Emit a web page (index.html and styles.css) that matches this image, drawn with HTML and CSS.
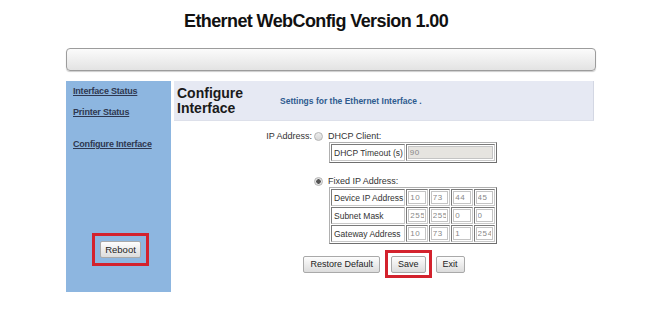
FILE: index.html
```html
<!DOCTYPE html>
<html lang="en">

<head>
    <meta charset="UTF-8">
    <meta name="viewport" content="width=device-width, initial-scale=1.0">
    <title>Ethernet WebConfig</title>
    <link rel="stylesheet" href="styles.css">
</head>

<body>
    <h1 class="title">Ethernet WebConfig Version 1.00</h1>
    <div class="page">
        <div class="bar"></div>
        <div class="frame">
            <!-- 左侧菜单 -->
            <div class="sidebar">
                <div class="nav">
                    <a href="#">Interface Status</a>
                    <a href="#" class="second">Printer Status</a>
                    <a href="#" class="third">Configure Interface</a>
                </div>
                <div class="mark">
                    <button class="btn">Reboot</button>
                </div>
            </div>
            <!-- 右侧内容 -->
            <div class="main">
                <div class="head">
                    <h2>Configure<br>Interface</h2>
                    <span>Settings for the Ethernet Interface .</span>
                </div>
                <div class="form">
                    <div class="field-label">IP Address:</div>
                    <div class="options">
                        <div class="option"><span class="radio"></span>DHCP Client:</div>
                        <table class="grid dhcp">
                            <tr>
                                <td class="name">DHCP Timeout (s)</td>
                                <td><input class="off" type="text" value="90"></td>
                            </tr>
                        </table>
                        <div class="option fixed"><span class="radio on"></span>Fixed IP Address:</div>
                        <table class="grid">
                            <tr>
                                <td class="name">Device IP Address</td>
                                <td><input type="text" value="10"></td>
                                <td><input type="text" value="73"></td>
                                <td><input type="text" value="44"></td>
                                <td><input type="text" value="45"></td>
                            </tr>
                            <tr>
                                <td class="name">Subnet Mask</td>
                                <td><input type="text" value="255"></td>
                                <td><input type="text" value="255"></td>
                                <td><input type="text" value="0"></td>
                                <td><input type="text" value="0"></td>
                            </tr>
                            <tr>
                                <td class="name">Gateway Address</td>
                                <td><input type="text" value="10"></td>
                                <td><input type="text" value="73"></td>
                                <td><input type="text" value="1"></td>
                                <td><input type="text" value="254"></td>
                            </tr>
                        </table>
                    </div>
                </div>
                <div class="actions">
                    <button class="btn">Restore Default</button>
                    <div class="mark save">
                        <button class="btn">Save</button>
                    </div>
                    <button class="btn">Exit</button>
                </div>
            </div>
        </div>
    </div>
</body>

</html>
```

FILE: styles.css
```css
* {
    margin: 0;
    padding: 0;
    box-sizing: border-box;
}

body {
    font-family: "Liberation Sans", Arial, sans-serif;
    color: #222;
    background-color: #fff;
}

.title {
    font-size: 18px;
    letter-spacing: -0.6px;
    line-height: 22px;
    padding: 10px 0 0 184px;
    color: #111;
}

.page {
    width: 530px;
    margin-left: 66px;
}

.bar {
    margin-top: 16px;
    height: 23px;
    border: 1px solid #9c9c9c;
    border-radius: 4px;
    background: linear-gradient(#fbfbfb, #e3e3e3);
    box-shadow: 0 1px 1px #ccc;
}

.frame {
    display: flex;
    margin-top: 10px;
    height: 211px;
}

/* 左侧菜单 */
.sidebar {
    width: 105px;
    background-color: #8db6e0;
    display: flex;
    flex-direction: column;
    justify-content: space-between;
    padding: 4px 0 26px 7px;
}

.nav a {
    display: block;
    font-size: 9px;
    font-weight: bold;
    letter-spacing: -0.2px;
    line-height: 12px;
    color: #2f3850;
}

.nav .second {
    margin-top: 9px;
}

.nav .third {
    margin-top: 20px;
}

.mark {
    align-self: center;
    border: 3px solid #d3222d;
    padding: 5px 5px;
}

.sidebar .mark {
    margin-left: -3px;
}

.btn {
    display: block;
    height: 17px;
    font-family: "Liberation Sans", Arial, sans-serif;
    font-size: 9.5px;
    color: #222;
    padding: 0 4px;
    border: 1px solid #a9a9a9;
    border-radius: 2px;
    background: linear-gradient(#fdfdfd, #dcdcdc);
}

/* 右侧内容 */
.main {
    flex: 1;
    margin-left: 3px;
}

.head {
    display: flex;
    align-items: center;
    height: 40px;
    margin-right: 2px;
    background-color: #e6e9f3;
    border-right: 1px solid #d3d7e3;
    border-bottom: 1px solid #dde0ea;
}

.head h2 {
    font-size: 14px;
    line-height: 15px;
    width: 106px;
    padding-left: 3px;
    color: #1a1a1a;
}

.head span {
    font-size: 8.5px;
    font-weight: bold;
    color: #2e5b8f;
}

.form {
    display: grid;
    grid-template-columns: 138px auto;
    padding-top: 9px;
    font-size: 9px;
}

.field-label {
    text-align: right;
    line-height: 12px;
    color: #333;
}

.option {
    display: flex;
    align-items: center;
    gap: 5px;
    margin-left: 2px;
    line-height: 12px;
    color: #333;
}

.option.fixed {
    margin-top: 12px;
}

.radio {
    width: 9px;
    height: 9px;
    border-radius: 50%;
    border: 1px solid #b5b5b5;
    background: linear-gradient(#eee, #d6d6d6);
}

.radio.on {
    background: radial-gradient(circle, #555 0 2px, #e4e4e4 2.5px);
}

.grid {
    margin-left: 17px;
    width: 168px;
    border: 1px solid;
    border-color: #b0b0b0 #6f6f6f #6f6f6f #b0b0b0;
    border-spacing: 1px;
}

.grid td {
    border: 1px solid;
    border-color: #7a7a7a #c8c8c8 #c8c8c8 #7a7a7a;
    height: 17px;
    padding: 0 1px;
}

.grid .name {
    width: 70px;
    font-size: 8.5px;
    color: #333;
    padding-left: 2px;
    white-space: nowrap;
}

.dhcp .name {
    width: 62px;
}

.grid input {
    display: block;
    width: 100%;
    height: 13px;
    border: 1px solid #c4c4c4;
    font-family: "Liberation Sans", Arial, sans-serif;
    font-size: 8px;
    letter-spacing: 0.6px;
    color: #888;
    padding: 0 1px;
    background-color: #fff;
}

.grid input.off {
    background-color: #e6e4e0;
}

.actions {
    display: flex;
    justify-content: center;
    align-items: center;
    margin-top: 6px;
    margin-right: 2px;
}

.actions .btn {
    font-size: 9px;
    padding: 0 6px;
}

.mark.save {
    padding: 2.5px 3px;
    margin: 0 4px 0 5px;
}
```
